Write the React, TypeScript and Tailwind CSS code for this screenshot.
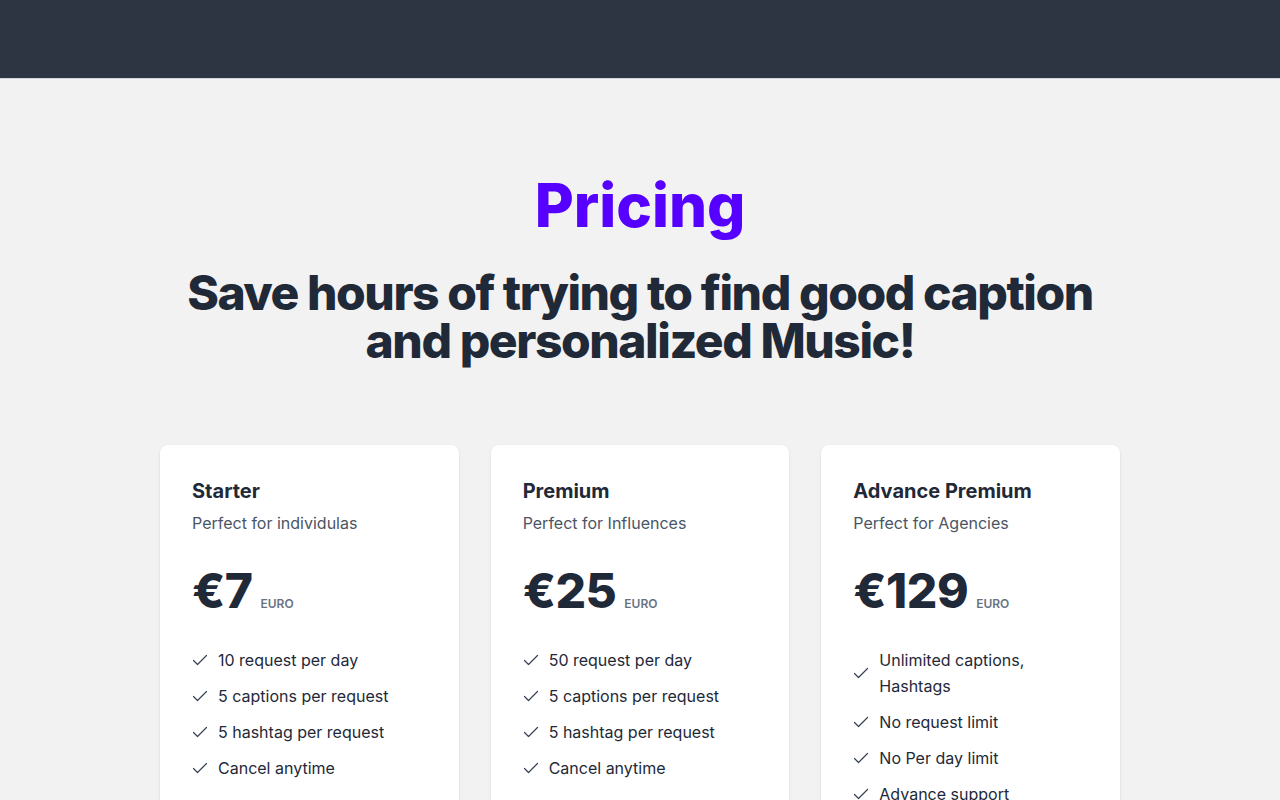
import React from "react";

const plans = [
  {
    name: "Starter",
    desc: "Perfect for individulas",
    price: "€7",
    features: ["10 request per day", "5 captions per request", "5 hashtag per request", "Cancel anytime"],
  },
  {
    name: "Premium",
    desc: "Perfect for Influences",
    price: "€25",
    features: ["50 request per day", "5 captions per request", "5 hashtag per request", "Cancel anytime"],
  },
  {
    name: "Advance Premium",
    desc: "Perfect for Agencies",
    price: "€129",
    features: ["Unlimited captions, Hashtags", "No request limit", "No Per day limit", "Advance support"],
  },
];

function Check() {
  return (
    <svg width="16" height="16" viewBox="0 0 16 16" fill="none" className="shrink-0 text-gray-700">
      <path d="M1.5 8.5 L5.5 12.5 L14.5 3.5" stroke="currentColor" strokeWidth="1.2" strokeLinecap="round" strokeLinejoin="round" />
    </svg>
  );
}

export default function App() {
  return (
    <div className="min-h-screen bg-[#f2f2f2] font-['Inter',sans-serif]">
      <header className="h-[79px] bg-[#2d3542] border-b border-[#cfd6e0]" />
      <main className="flex flex-col items-center pt-[96px]">
        <h1 className="text-6xl font-extrabold leading-none text-[#5600ff]">Pricing</h1>
        <h2 className="mt-[34px] text-center text-5xl font-extrabold leading-[48px] tracking-[-0.03em] text-[#1f2937]">
          Save hours of trying to find good caption
          <br />
          and personalized Music!
        </h2>
        <div className="mt-[80px] grid w-[960px] grid-cols-3 gap-8">
          {plans.map((p) => (
            <div key={p.name} className="rounded-lg bg-white p-8 shadow-sm h-[400px]">
              <h3 className="text-xl font-bold leading-7 text-[#1f2937]">{p.name}</h3>
              <p className="mt-1.5 text-base leading-6 text-gray-600">{p.desc}</p>
              <div className="mt-8 flex items-baseline gap-2">
                <span className="text-5xl font-extrabold leading-none tracking-[-0.01em] text-[#1f2937]">{p.price}</span>
                <span className="text-xs font-semibold text-gray-500">EURO</span>
              </div>
              <ul className="mt-8 flex flex-col gap-[10px]">
                {p.features.map((f) => (
                  <li key={f} className="flex items-center gap-[10px] text-base leading-[26px] text-gray-800">
                    <Check />
                    <span>{f}</span>
                  </li>
                ))}
              </ul>
            </div>
          ))}
        </div>
      </main>
    </div>
  );
}
